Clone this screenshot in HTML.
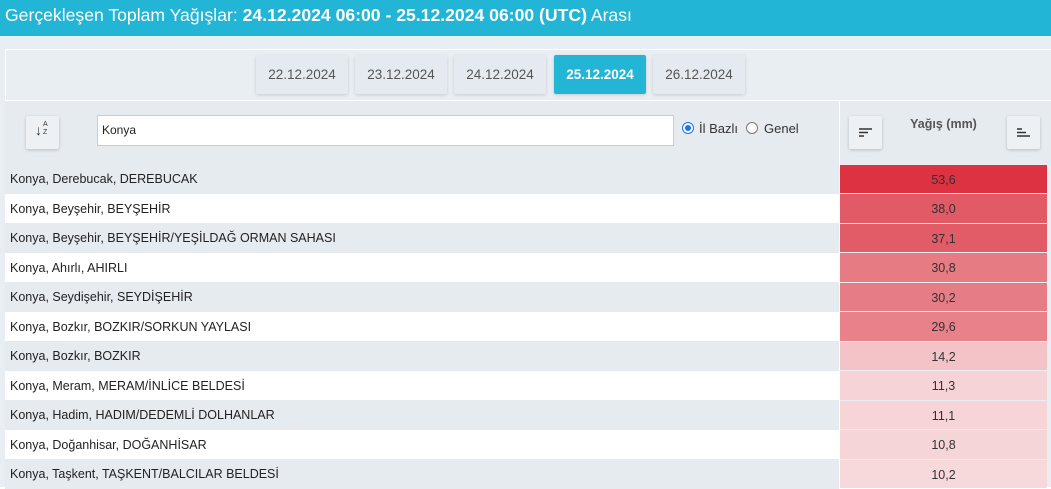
<!DOCTYPE html>
<html><head><meta charset="utf-8"><style>
*{margin:0;padding:0;box-sizing:border-box}
body{width:1051px;height:487px;overflow:hidden;background:#fff;font-family:"Liberation Sans",sans-serif;position:relative}
.hdr{position:absolute;left:0;top:0;width:1051px;height:36px;background:#23b5d6;color:#fff;font-size:17.6px;padding:5px 0 0 5px;white-space:nowrap}
.bg{position:absolute;left:0;top:36px;width:1051px;height:451px;background:#e9eef3}
.panel{position:absolute;left:5px;top:49px;width:1046px;height:51px;background:#e9eef3;border-top:1px solid #fff;border-left:1px solid #fff}
.tab{position:absolute;top:55px;width:92px;height:39px;background:#e5eaf0;color:#555;font-size:13.5px;text-align:center;line-height:39px;box-shadow:0 1px 3px rgba(0,0,0,.15);border-radius:2px}
.tab.a{background:#23b5d6;color:#fff;font-weight:bold}
.hrow{position:absolute;left:5px;top:100px;width:1046px;height:64px;background:#e6ebf0;border-top:1px solid #fff}
.btn{position:absolute;width:33px;height:33px;background:#eef1f4;box-shadow:0 1px 3px rgba(0,0,0,.2);border-radius:2px}
.inp{position:absolute;left:97px;top:115px;width:577px;height:31px;background:#fff;border:1px solid #ccc;font-size:12px;padding:7px 4px;color:#222}
.row{position:absolute;left:5px;width:834px;height:29.5px;font-size:12.5px;color:#222;padding:8px 0 0 5px}
.val{position:absolute;left:840px;width:207px;height:28.5px;font-size:12.5px;color:#333;text-align:center;padding-top:8px}
.g{background:#e6ebf0}.w{background:#fff}
</style></head><body>
<div class="hdr">Gerçekleşen Toplam Yağışlar: <b>24.12.2024 06:00 - 25.12.2024 06:00 (UTC)</b> Arası</div>
<div class="bg"></div>
<div class="panel"></div>
<div class="tab" style="left:256px">22.12.2024</div>
<div class="tab" style="left:355px">23.12.2024</div>
<div class="tab" style="left:454px">24.12.2024</div>
<div class="tab a" style="left:554px">25.12.2024</div>
<div class="tab" style="left:653px">26.12.2024</div>
<div class="hrow"></div>
<div style="position:absolute;left:839px;top:100px;width:1px;height:387px;background:#fff"></div>
<div class="btn" style="left:26px;top:116px"><span style="position:absolute;left:9px;top:6px;font-size:14px;font-weight:bold;color:#333">↓</span><span style="position:absolute;left:17px;top:5px;font-size:7px;line-height:8px;color:#333">A<br>Z</span></div>
<div class="inp">Konya</div>
<div style="position:absolute;left:682px;top:122px;width:12px;height:12px;border-radius:50%;border:1px solid #1a73e8;background:#fff"><div style="margin:2px;width:6px;height:6px;border-radius:50%;background:#1a73e8"></div></div>
<div style="position:absolute;left:699px;top:121px;font-size:13px;color:#333">İl Bazlı</div>
<div style="position:absolute;left:746px;top:122px;width:12px;height:12px;border-radius:50%;border:1px solid #777;background:#fff"></div>
<div style="position:absolute;left:764px;top:121px;font-size:13px;color:#333">Genel</div>
<div class="btn" style="left:849px;top:116px"><svg width="33" height="33"><path d="M10 13h13M10 16.5h9M10 20h5" stroke="#333" stroke-width="1.6"/></svg></div>
<div style="position:absolute;left:840px;top:117px;width:207px;text-align:center;font-size:12.5px;font-weight:bold;color:#555">Yağış (mm)</div>
<div class="btn" style="left:1007px;top:116px"><svg width="33" height="33"><path d="M10 13h5M10 16.5h9M10 20h13" stroke="#333" stroke-width="1.6"/></svg></div>

<div class="row g" style="top:164px">Konya, Derebucak, DEREBUCAK</div><div class="val" style="top:164.5px;background:#dc3242">53,6</div>
<div class="row w" style="top:193.5px">Konya, Beyşehir, BEYŞEHİR</div><div class="val" style="top:194px;background:#e15a65">38,0</div>
<div class="row g" style="top:223px">Konya, Beyşehir, BEYŞEHİR/YEŞİLDAĞ ORMAN SAHASI</div><div class="val" style="top:223.5px;background:#e15c67">37,1</div>
<div class="row w" style="top:252.5px">Konya, Ahırlı, AHIRLI</div><div class="val" style="top:253px;background:#e67b84">30,8</div>
<div class="row g" style="top:282px">Konya, Seydişehir, SEYDİŞEHİR</div><div class="val" style="top:282.5px;background:#e67d86">30,2</div>
<div class="row w" style="top:311.5px">Konya, Bozkır, BOZKIR/SORKUN YAYLASI</div><div class="val" style="top:312px;background:#e88189">29,6</div>
<div class="row g" style="top:341px">Konya, Bozkır, BOZKIR</div><div class="val" style="top:341.5px;background:#f3c3c7">14,2</div>
<div class="row w" style="top:370.5px">Konya, Meram, MERAM/İNLİCE BELDESİ</div><div class="val" style="top:371px;background:#f6d3d6">11,3</div>
<div class="row g" style="top:400px">Konya, Hadim, HADIM/DEDEMLİ DOLHANLAR</div><div class="val" style="top:400.5px;background:#f6d4d7">11,1</div>
<div class="row w" style="top:429.5px">Konya, Doğanhisar, DOĞANHİSAR</div><div class="val" style="top:430px;background:#f6d5d8">10,8</div>
<div class="row g" style="top:459px">Konya, Taşkent, TAŞKENT/BALCILAR BELDESİ</div><div class="val" style="top:459.5px;background:#f7d8db">10,2</div>
</body></html>
